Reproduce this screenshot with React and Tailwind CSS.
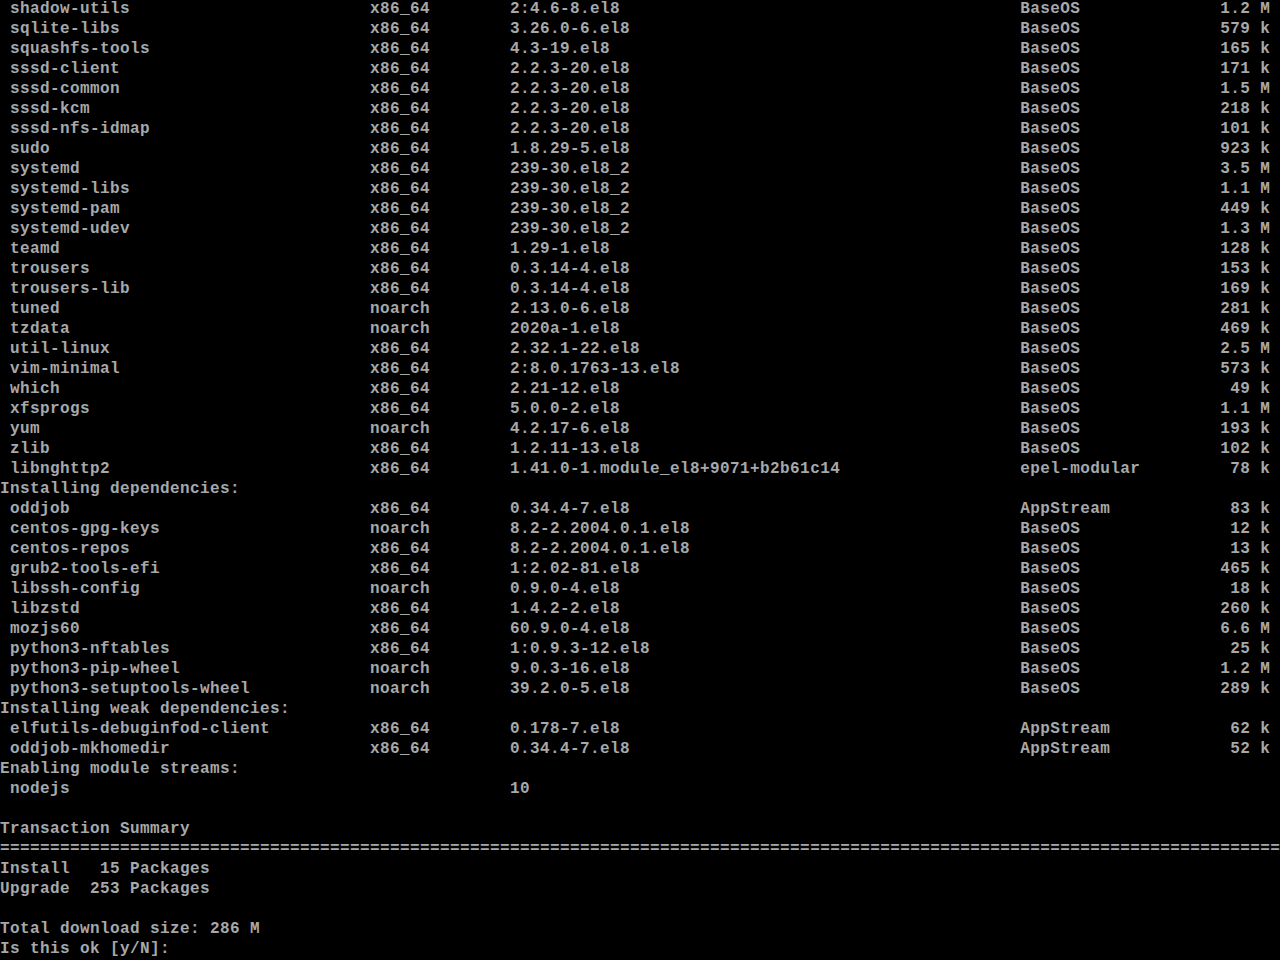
const pkg = (name, arch, ver, repo, size) =>
  " " + name.padEnd(36) + arch.padEnd(14) + ver.padEnd(51) + repo.padEnd(20) + size.padStart(5);

const lines = [
  pkg("shadow-utils", "x86_64", "2:4.6-8.el8", "BaseOS", "1.2 M"),
  pkg("sqlite-libs", "x86_64", "3.26.0-6.el8", "BaseOS", "579 k"),
  pkg("squashfs-tools", "x86_64", "4.3-19.el8", "BaseOS", "165 k"),
  pkg("sssd-client", "x86_64", "2.2.3-20.el8", "BaseOS", "171 k"),
  pkg("sssd-common", "x86_64", "2.2.3-20.el8", "BaseOS", "1.5 M"),
  pkg("sssd-kcm", "x86_64", "2.2.3-20.el8", "BaseOS", "218 k"),
  pkg("sssd-nfs-idmap", "x86_64", "2.2.3-20.el8", "BaseOS", "101 k"),
  pkg("sudo", "x86_64", "1.8.29-5.el8", "BaseOS", "923 k"),
  pkg("systemd", "x86_64", "239-30.el8_2", "BaseOS", "3.5 M"),
  pkg("systemd-libs", "x86_64", "239-30.el8_2", "BaseOS", "1.1 M"),
  pkg("systemd-pam", "x86_64", "239-30.el8_2", "BaseOS", "449 k"),
  pkg("systemd-udev", "x86_64", "239-30.el8_2", "BaseOS", "1.3 M"),
  pkg("teamd", "x86_64", "1.29-1.el8", "BaseOS", "128 k"),
  pkg("trousers", "x86_64", "0.3.14-4.el8", "BaseOS", "153 k"),
  pkg("trousers-lib", "x86_64", "0.3.14-4.el8", "BaseOS", "169 k"),
  pkg("tuned", "noarch", "2.13.0-6.el8", "BaseOS", "281 k"),
  pkg("tzdata", "noarch", "2020a-1.el8", "BaseOS", "469 k"),
  pkg("util-linux", "x86_64", "2.32.1-22.el8", "BaseOS", "2.5 M"),
  pkg("vim-minimal", "x86_64", "2:8.0.1763-13.el8", "BaseOS", "573 k"),
  pkg("which", "x86_64", "2.21-12.el8", "BaseOS", "49 k"),
  pkg("xfsprogs", "x86_64", "5.0.0-2.el8", "BaseOS", "1.1 M"),
  pkg("yum", "noarch", "4.2.17-6.el8", "BaseOS", "193 k"),
  pkg("zlib", "x86_64", "1.2.11-13.el8", "BaseOS", "102 k"),
  pkg("libnghttp2", "x86_64", "1.41.0-1.module_el8+9071+b2b61c14", "epel-modular", "78 k"),
  "Installing dependencies:",
  pkg("oddjob", "x86_64", "0.34.4-7.el8", "AppStream", "83 k"),
  pkg("centos-gpg-keys", "noarch", "8.2-2.2004.0.1.el8", "BaseOS", "12 k"),
  pkg("centos-repos", "x86_64", "8.2-2.2004.0.1.el8", "BaseOS", "13 k"),
  pkg("grub2-tools-efi", "x86_64", "1:2.02-81.el8", "BaseOS", "465 k"),
  pkg("libssh-config", "noarch", "0.9.0-4.el8", "BaseOS", "18 k"),
  pkg("libzstd", "x86_64", "1.4.2-2.el8", "BaseOS", "260 k"),
  pkg("mozjs60", "x86_64", "60.9.0-4.el8", "BaseOS", "6.6 M"),
  pkg("python3-nftables", "x86_64", "1:0.9.3-12.el8", "BaseOS", "25 k"),
  pkg("python3-pip-wheel", "noarch", "9.0.3-16.el8", "BaseOS", "1.2 M"),
  pkg("python3-setuptools-wheel", "noarch", "39.2.0-5.el8", "BaseOS", "289 k"),
  "Installing weak dependencies:",
  pkg("elfutils-debuginfod-client", "x86_64", "0.178-7.el8", "AppStream", "62 k"),
  pkg("oddjob-mkhomedir", "x86_64", "0.34.4-7.el8", "AppStream", "52 k"),
  "Enabling module streams:",
  " " + "nodejs".padEnd(50) + "10",
  "",
  "Transaction Summary",
  "=".repeat(128),
  "Install   15 Packages",
  "Upgrade  253 Packages",
  "",
  "Total download size: 286 M",
  "Is this ok [y/N]:",
];

export default function App() {
  return (
    <div className="w-[1280px] h-[960px] bg-black overflow-hidden text-[#a8a8a8] font-['Liberation_Mono',monospace] font-bold text-[16px] tracking-[0.4px]">
      {lines.map((line, i) => (
        <div key={i} className="h-[20px] leading-[18px] whitespace-pre">
          {line}
        </div>
      ))}
    </div>
  );
}
